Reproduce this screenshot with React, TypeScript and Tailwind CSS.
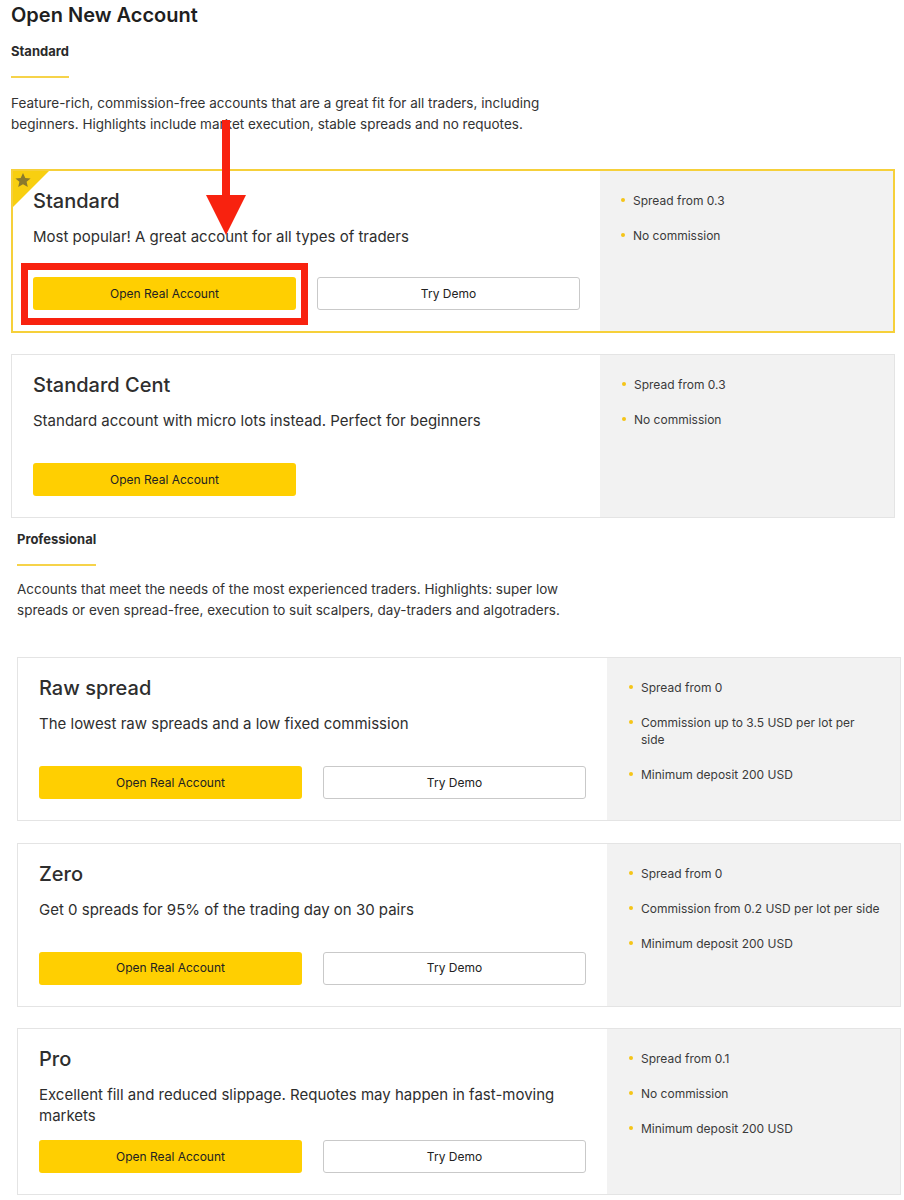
const standardCards = [
  {
    name: 'Standard',
    text: 'Most popular! A great account for all types of traders',
    demo: true,
    featured: true,
    features: ['Spread from 0.3', 'No commission'],
  },
  {
    name: 'Standard Cent',
    text: 'Standard account with micro lots instead. Perfect for beginners',
    demo: false,
    featured: false,
    features: ['Spread from 0.3', 'No commission'],
  },
];

const proCards = [
  {
    name: 'Raw spread',
    text: 'The lowest raw spreads and a low fixed commission',
    demo: true,
    featured: false,
    features: ['Spread from 0', 'Commission up to 3.5 USD per lot per side', 'Minimum deposit 200 USD'],
  },
  {
    name: 'Zero',
    text: 'Get 0 spreads for 95% of the trading day on 30 pairs',
    demo: true,
    featured: false,
    features: ['Spread from 0', 'Commission from 0.2 USD per lot per side', 'Minimum deposit 200 USD'],
  },
  {
    name: 'Pro',
    text: 'Excellent fill and reduced slippage. Requotes may happen in fast-moving markets',
    demo: true,
    featured: false,
    features: ['Spread from 0.1', 'No commission', 'Minimum deposit 200 USD'],
  },
];

type Card = (typeof standardCards)[number];

const SectionLabel = ({ label }: { label: string }) => (
  <div className="inline-flex flex-col">
    <span className="text-[13px] leading-[18px] font-bold text-[#2b2b2b]">{label}</span>
    <span className="mt-[16px] h-[2px] w-full bg-[#f6d34a]" />
  </div>
);

const AccountCard = ({ card }: { card: Card }) => {
  return (
    <div
      className={`relative flex min-h-[164px] bg-white ${
        card.featured ? 'border-2 border-[#f6d03a]' : 'border border-[#e4e4e4]'
      }`}
    >
      {card.featured && (
        <svg className="absolute left-0 top-0" width="36" height="36" viewBox="0 0 36 36">
          <polygon points="0,0 36,0 0,36" fill="#f8cf10" />
          <polygon
            points="10,2 12.3,7 17.6,7.4 13.6,10.8 14.8,16 10,13.2 5.2,16 6.4,10.8 2.4,7.4 7.7,7"
            fill="#8b7a2c"
          />
        </svg>
      )}
      <div className={`flex flex-1 flex-col pt-[16px] pb-[21px] ${card.featured ? 'px-[20px]' : 'px-[21px]'}`}>
        <h3 className="text-[20px] leading-[28px] font-medium text-[#2e2e2e]">{card.name}</h3>
        <p className="mt-[11px] mb-[14px] max-w-[545px] text-[15px] leading-[21px] text-[#2e2e2e]">{card.text}</p>
        <div className="mt-auto flex gap-[21px]">
          <div className="relative w-[263px]">
            <button className="h-[33px] w-full rounded-[3px] bg-[#ffcf01] text-[12px] text-[#222]">
              Open Real Account
            </button>
            {card.featured && (
              <span className="pointer-events-none absolute -left-[12px] -top-[14px] h-[62px] w-[287px] border-[7px] border-[#f8220f]" />
            )}
          </div>
          {card.demo && (
            <button className="h-[33px] w-[263px] rounded-[3px] border border-[#c9c9c9] bg-white text-[12px] text-[#222]">
              Try Demo
            </button>
          )}
        </div>
      </div>
      <ul
        className={`flex w-[294px] flex-col gap-[18px] bg-[#f2f2f2] pr-[20px] pt-[21px] ${
          card.featured ? 'pl-[21px]' : 'pl-[22px]'
        }`}
      >
        {card.features.map((f) => (
          <li key={f} className="flex text-[12px] leading-[17px] text-[#3a3a3a]">
            <span className="mt-[6px] mr-[8px] h-[4px] w-[4px] shrink-0 rounded-full bg-[#f5c518]" />
            {f}
          </li>
        ))}
      </ul>
    </div>
  );
};

export default function App() {
  return (
    <div className="relative w-[904px] bg-white pb-[8px] font-['Inter',sans-serif] text-[#2e2e2e]">
      <div className="px-[11px] pr-[9px] pt-[1px]">
        <h1 className="text-[20px] leading-[28px] font-semibold text-[#1f1f1f]">Open New Account</h1>
        <div className="mt-[9px]">
          <SectionLabel label="Standard" />
        </div>
        <p className="mt-[15px] text-[13.5px] leading-[21px] text-[#333]">
          Feature-rich, commission-free accounts that are a great fit for all traders, including
          <br />
          beginners. Highlights include market execution, stable spreads and no requotes.
        </p>
        <div className="mt-[34px] flex flex-col gap-[21px]">
          {standardCards.map((c) => (
            <AccountCard key={c.name} card={c} />
          ))}
        </div>
      </div>

      <div className="pl-[17px] pr-[3px]">
        <div className="mt-[8px]">
          <SectionLabel label="Professional" />
        </div>
        <p className="mt-[13px] text-[13.5px] leading-[21px] text-[#333]">
          Accounts that meet the needs of the most experienced traders. Highlights: super low
          <br />
          spreads or even spread-free, execution to suit scalpers, day-traders and algotraders.
        </p>
        <div className="mt-[36px] flex flex-col gap-[21.5px]">
          {proCards.map((c) => (
            <AccountCard key={c.name} card={c} />
          ))}
        </div>
      </div>

      {/* red annotation arrow */}
      <svg className="pointer-events-none absolute left-[204px] top-[118px]" width="44" height="120" viewBox="0 0 44 120">
        <rect x="18" y="2" width="8" height="80" fill="#f8220f" />
        <polygon points="2,77 42,77 22,117" fill="#f8220f" />
      </svg>
    </div>
  );
}
